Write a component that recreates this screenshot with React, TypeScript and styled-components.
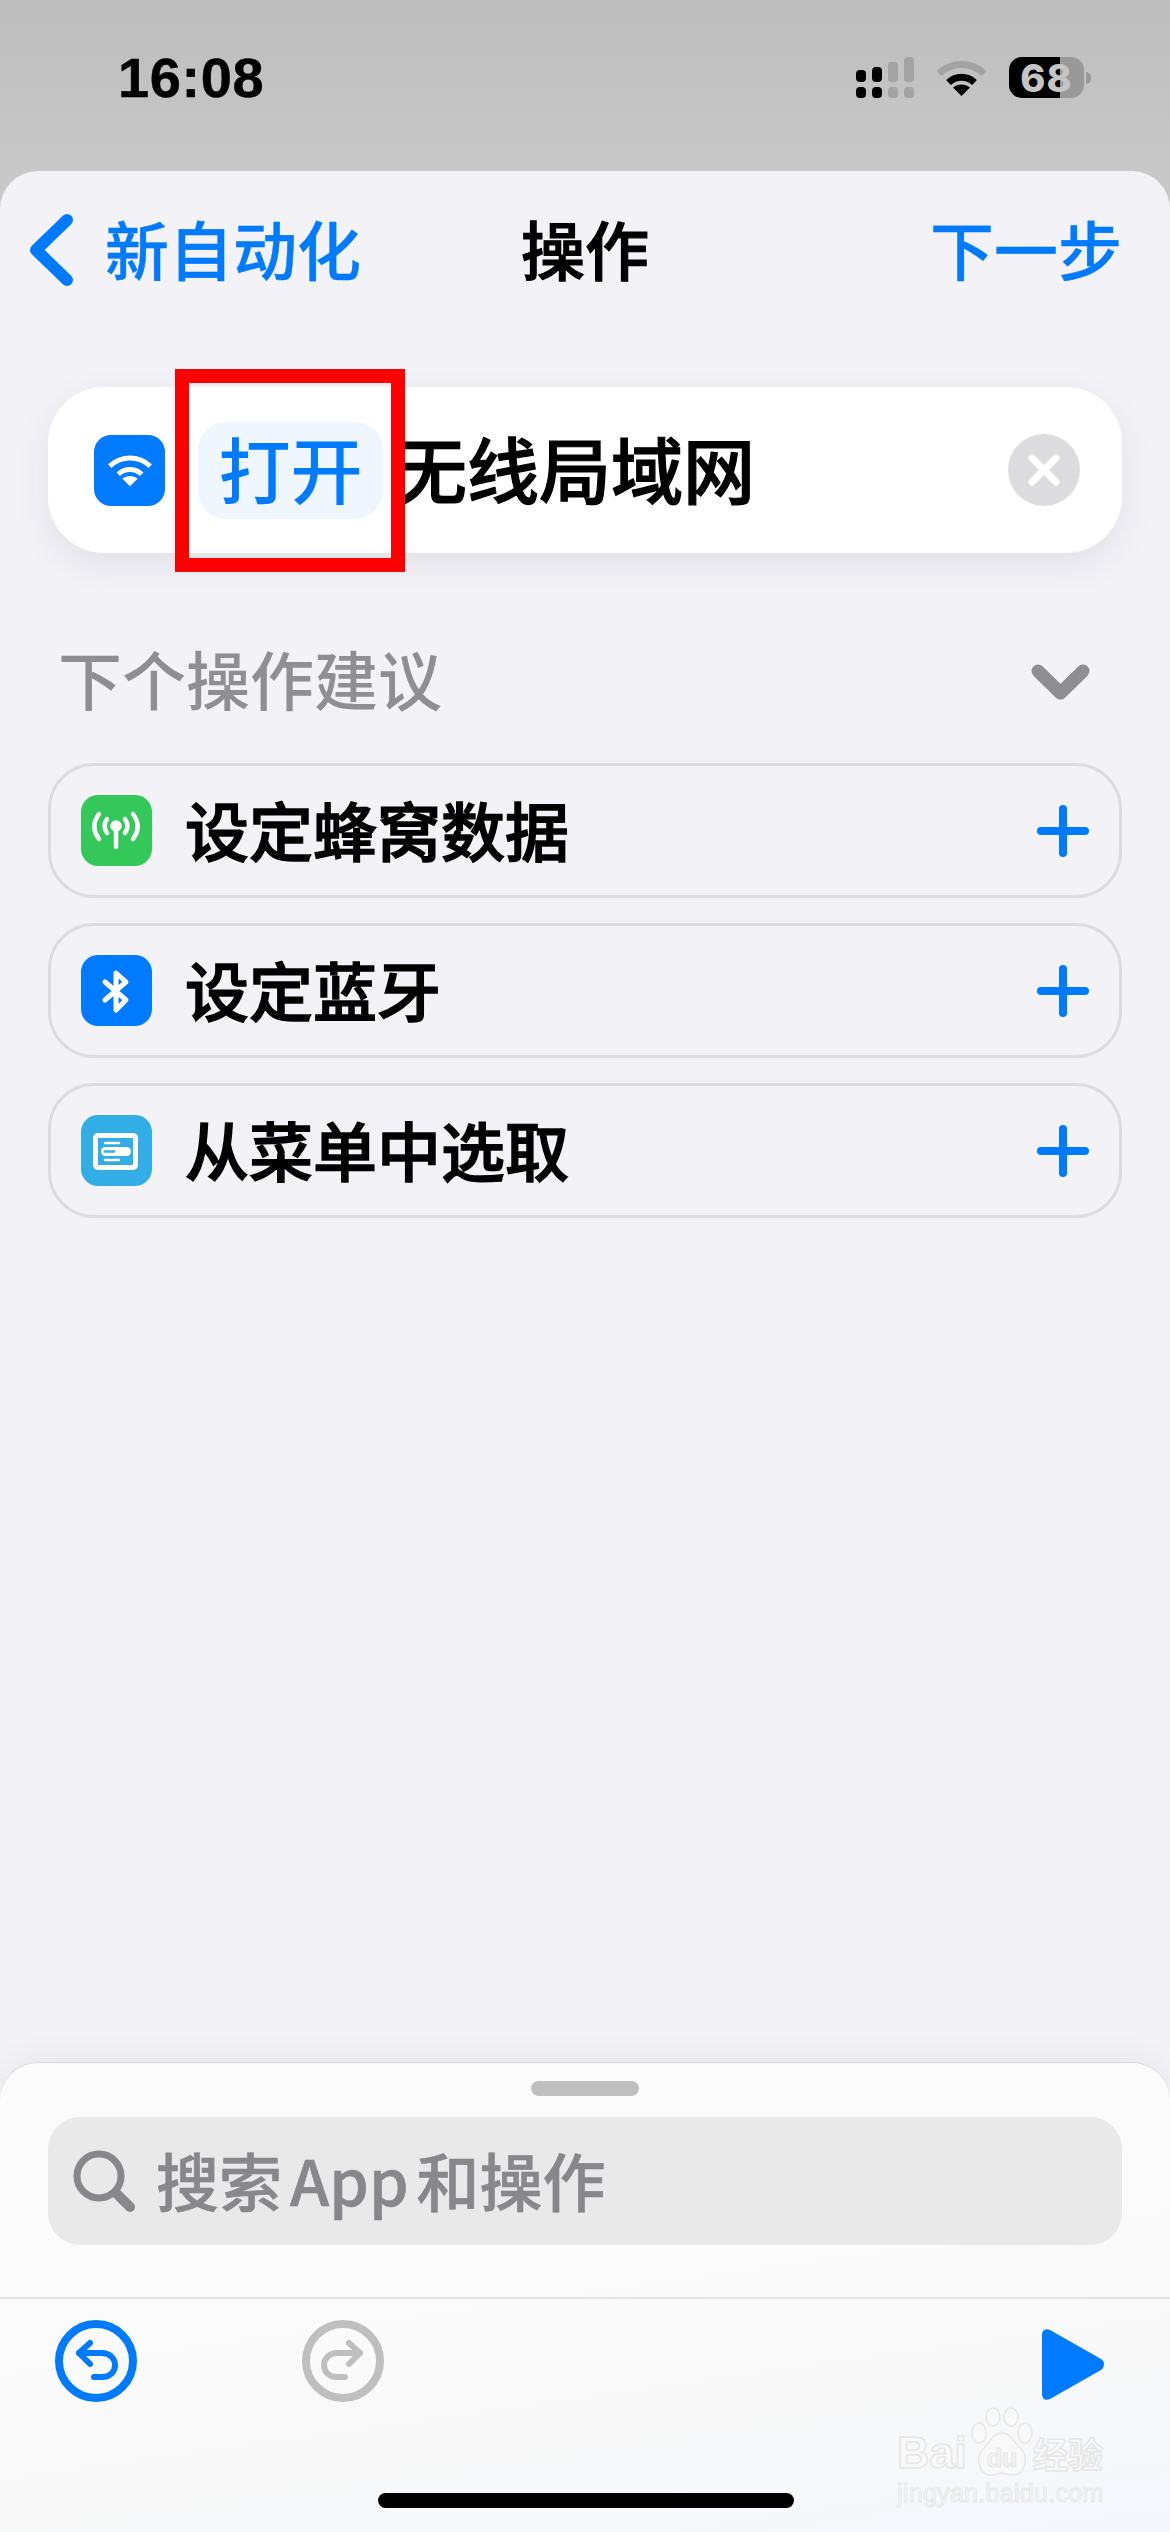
import styled, { createGlobalStyle } from "styled-components";

const Global = createGlobalStyle`
  html, body { margin: 0; padding: 0; background: #c4c4c4; }
  * { box-sizing: border-box; }
  body { font-family: "Noto Sans CJK SC", "Liberation Sans", sans-serif; }
`;

const Screen = styled.div`
  position: relative;
  width: 1170px;
  height: 2532px;
  overflow: hidden;
  display: flex;
  flex-direction: column;
  background: linear-gradient(#bdbdbd, #c8c8c8 171px);
`;

const StatusBar = styled.div`
  height: 171px;
  flex: none;
  padding: 57px 79px 0 118px;
  display: flex;
  justify-content: space-between;
  align-items: flex-start;
`;

const Clock = styled.div`
  font-family: "Liberation Sans", sans-serif;
  font-weight: 700;
  font-size: 56px;
  line-height: 42px;
  letter-spacing: 0.6px;
  color: #000;
  -webkit-text-stroke: 0.5px #000;
`;

const StatusIcons = styled.div`
  display: flex;
  align-items: flex-start;
  gap: 22px;
`;

const WifiSlot = styled.div`
  margin-top: 2px;
  line-height: 0;
`;

const BatteryWrap = styled.div`
  display: flex;
  align-items: center;
  gap: 2px;
`;

const Battery = styled.div`
  position: relative;
  width: 75px;
  height: 41px;
  border-radius: 13px;
  background: linear-gradient(90deg, #000 68%, #999 68%);
  display: flex;
  align-items: center;
  justify-content: center;
  font-family: "Inter", sans-serif;
  font-weight: 800;
  font-size: 38px;
  letter-spacing: 1px;
  color: #c5c5c5;
`;

const BatteryNub = styled.div`
  width: 5px;
  height: 12px;
  border-radius: 0 6px 6px 0;
  background: #999;
`;

const Sheet = styled.div`
  flex: 1;
  display: flex;
  flex-direction: column;
  min-height: 0;
  background: #f2f2f7;
  border-radius: 38px 38px 0 0;
`;

const NavBar = styled.div`
  height: 158px;
  flex: none;
  padding: 0 48px;
  display: grid;
  grid-template-columns: 1fr auto 1fr;
  align-items: center;
`;

const BackLink = styled.div`
  margin-left: -20px;
  display: flex;
  align-items: center;
  gap: 30px;
`;

const NavAction = styled.div<{ $strong?: boolean }>`
  font-size: 64px;
  line-height: 80px;
  padding-bottom: 6px;
  font-weight: 500;
  color: ${(p) => (p.$strong ? "#000" : "#007aff")};
  -webkit-text-stroke: ${(p) => (p.$strong ? "1.2px #000" : "0.4px #007aff")};
`;

const NextLink = styled(NavAction)`
  justify-self: end;
`;

const Body = styled.div`
  flex: 1;
  min-height: 0;
  padding: 58px 48px 0;
  display: flex;
  flex-direction: column;
`;

const ActionCard = styled.div`
  height: 166px;
  flex: none;
  background: #fff;
  border-radius: 56px;
  box-shadow: 0 12px 34px rgba(60, 60, 80, 0.09);
  padding: 0 42px 0 46px;
  display: flex;
  align-items: center;
`;

const AppIcon = styled.div<{ $bg: string }>`
  width: 71px;
  height: 71px;
  flex: none;
  border-radius: 17px;
  background: ${(p) => p.$bg};
  display: flex;
  align-items: center;
  justify-content: center;
`;

const ChipFrame = styled.div`
  position: relative;
  margin-left: 33px;
  width: 185px;
  height: 97px;
  flex: none;
  padding-bottom: 8px;
  border-radius: 28px;
  background: #eff6fe;
  display: flex;
  align-items: center;
  justify-content: center;
  font-size: 72px;
  font-weight: 500;
  line-height: 89px;
  color: #007aff;
`;

const RedMark = styled.div`
  position: absolute;
  left: -23px;
  top: -53px;
  width: 230px;
  height: 203px;
  border: 14px solid #ff0000;
`;

const ActionName = styled.div`
  margin-left: 12px;
  padding-bottom: 8px;
  flex: 1;
  font-size: 72px;
  font-weight: 500;
  line-height: 89px;
  color: #000;
  -webkit-text-stroke: 1.2px #000;
`;

const ClearButton = styled.div`
  width: 72px;
  height: 72px;
  flex: none;
  border-radius: 50%;
  background: #dcdcde;
  display: flex;
  align-items: center;
  justify-content: center;
`;

const SectionHead = styled.div`
  margin-top: 80px;
  height: 88px;
  padding: 0 32px 0 10px;
  display: flex;
  align-items: center;
  justify-content: space-between;
`;

const SectionTitle = styled.div`
  font-size: 64px;
  font-weight: 500;
  line-height: 80px;
  color: #8e8e93;
`;

const SectionToggle = styled.svg`
  margin-top: 10px;
  flex: none;
`;

const SuggestionList = styled.div`
  margin-top: 42px;
  display: flex;
  flex-direction: column;
  gap: 25px;
`;

const Suggestion = styled.div`
  height: 135px;
  border: 3px solid #dcdce0;
  border-radius: 46px;
  padding: 0 29px 0 30px;
  display: flex;
  align-items: center;
`;

const SuggestionName = styled.div`
  margin-left: 33px;
  padding-bottom: 5px;
  flex: 1;
  font-size: 64px;
  font-weight: 500;
  line-height: 80px;
  color: #000;
  -webkit-text-stroke: 1.4px #000;
`;

const BottomPanel = styled.div`
  position: relative;
  height: 469px;
  flex: none;
  border-radius: 38px 38px 0 0;
  background: linear-gradient(172deg, #fbfbfb 45%, #f8f8f8 70%, #f4f8fd 100%);
  box-shadow: 0 -8px 26px rgba(60, 60, 80, 0.06), 0 -1px 0 #dedee2;
  display: flex;
  flex-direction: column;
`;

const Grabber = styled.div`
  align-self: center;
  margin-top: 18px;
  width: 108px;
  height: 15px;
  flex: none;
  border-radius: 8px;
  background: #bfbfbf;
`;

const SearchBox = styled.div`
  margin: 21px 48px 0;
  height: 128px;
  flex: none;
  border-radius: 32px;
  background: #e9e9e9;
  padding: 0 0 0 25px;
  display: flex;
  align-items: center;
  gap: 21px;
`;

const SearchText = styled.div`
  padding-bottom: 5px;
  font-size: 63px;
  font-weight: 500;
  line-height: 80px;
  color: #87878c;
  -webkit-text-stroke: 0.6px #87878c;
`;

const SearchLatin = styled.span`
  margin: 0 8px;
`;

const Toolbar = styled.div`
  margin-top: 52px;
  border-top: 2px solid #e3e3e3;
  flex: 1;
  padding: 21px 65px 0 55px;
  display: flex;
  align-items: flex-start;
  gap: 165px;
`;

const PlayButton = styled.div`
  margin-left: auto;
  margin-top: 9px;
  line-height: 0;
`;

const HomeIndicator = styled.div`
  position: absolute;
  left: 378px;
  bottom: 24px;
  width: 416px;
  height: 15px;
  border-radius: 8px;
  background: #000;
`;

const Watermark = styled.div`
  position: absolute;
  left: 897px;
  top: 343px;
  width: 212px;
  color: #f9f9f9;
  -webkit-text-stroke: 1.5px #e6e6e6;
  font-family: "Liberation Sans", sans-serif;
`;

const MarkTop = styled.div`
  height: 68px;
  display: flex;
  align-items: flex-end;
  font-size: 45px;
  font-weight: 700;
  line-height: 42px;
`;

const MarkPaw = styled.svg`
  margin: 0 0 -3px 3px;
  flex: none;
`;

const MarkCn = styled.span`
  font-family: "Noto Sans CJK SC", sans-serif;
  font-size: 35px;
  line-height: 42px;
  margin-left: -1px;
`;

const MarkUrl = styled.div`
  margin-top: 4px;
  font-size: 25px;
  line-height: 30px;
  letter-spacing: 0.3px;
  -webkit-text-stroke: 1px #e6e6e6;
`;

const suggestions = [
  { name: "设定蜂窝数据", bg: "#34c759", icon: "cell" },
  { name: "设定蓝牙", bg: "#007aff", icon: "bt" },
  { name: "从菜单中选取", bg: "#32ade6", icon: "menu" },
];

function SignalIcon() {
  const upper = [
    [0, 13, 12, "#000"],
    [16, 10, 15, "#000"],
    [32, 5, 20, "#a3a3a3"],
    [48, 0, 25, "#a3a3a3"],
  ] as const;
  return (
    <svg width="58" height="41" viewBox="0 0 58 41">
      {upper.map(([x, y, h, c]) => (
        <g key={x} fill={c}>
          <rect x={x} y={y} width="10" height={h} rx="4" />
          <rect x={x} y="30" width="10" height="11" rx="4" />
        </g>
      ))}
    </svg>
  );
}

function WifiIcon({ color = "#000", outer = "#a3a3a3", size = 51, weight = 7 }) {
  return (
    <svg width={size} height={(size * 37) / 51} viewBox="0 0 51 37" fill="none">
      <path d="M3 14.5C16 2.500 35 2.500 48 14.500" stroke={outer} strokeWidth={weight} />
      <path d="M12.500 23.500C20 16.500 31 16.500 38.500 23.500" stroke={color} strokeWidth={weight} />
      <path d="M25.500 37L17 28.500C22 24.500 29 24.500 34 28.500Z" fill={color} />
    </svg>
  );
}

function RowGlyph({ kind }: { kind: string }) {
  if (kind === "cell") {
    return (
      <svg width="71" height="71" viewBox="0 0 71 71" fill="none" stroke="#fff" strokeWidth="4.500" strokeLinecap="round">
        <circle cx="35" cy="31" r="3.500" fill="#fff" />
        <path d="M35 31V52" />
        <path d="M26 24C22.500 29 22.500 33 26 38M44 24C47.500 29 47.500 33 44 38" />
        <path d="M18 19C12 27 12 36 18 44M52 19C58 27 58 36 52 44" />
      </svg>
    );
  }
  if (kind === "bt") {
    return (
      <svg width="71" height="71" viewBox="0 0 71 71" fill="none" stroke="#fff" strokeWidth="5" strokeLinecap="round" strokeLinejoin="round">
        <path d="M24 27L45 45L35 55V18L45 27L24 45" />
      </svg>
    );
  }
  return (
    <svg width="71" height="71" viewBox="0 0 71 71">
      <rect x="12" y="18" width="45" height="37" rx="5" fill="#fff" />
      <rect x="17" y="23" width="35" height="27" fill="#32ade6" />
      <rect x="20" y="32" width="30" height="9" rx="4.500" fill="#fff" />
      <path d="M24 28H38M24 45H38" stroke="#fff" strokeWidth="2.500" strokeLinecap="round" />
      <path d="M24 36.500H33" stroke="#32ade6" strokeWidth="2.500" strokeLinecap="round" />
    </svg>
  );
}

function PlusIcon() {
  return (
    <svg width="54" height="54" viewBox="0 0 54 54" stroke="#007aff" strokeWidth="8" strokeLinecap="round">
      <path d="M27 5V49M5 27H49" />
    </svg>
  );
}

function HistoryIcon({ color, flip }: { color: string; flip?: boolean }) {
  return (
    <svg width="82" height="82" viewBox="0 0 82 82" fill="none" stroke={color} strokeLinecap="round" strokeLinejoin="round">
      <circle cx="41" cy="41" r="37" strokeWidth="8" />
      <g strokeWidth="6" transform={flip ? "matrix(-1 0 0 1 82 0)" : undefined}>
        <path d="M35 23L24 33L35 44" />
        <path d="M24 33H47C55 33 60 39 60 45C60 52 55 57 47 57H39" />
      </g>
    </svg>
  );
}

export default function App() {
  return (
    <Screen>
      <Global />
      <StatusBar>
        <Clock>16:08</Clock>
        <StatusIcons>
          <SignalIcon />
          <WifiSlot>
            <WifiIcon />
          </WifiSlot>
          <BatteryWrap>
            <Battery>68</Battery>
            <BatteryNub />
          </BatteryWrap>
        </StatusIcons>
      </StatusBar>
      <Sheet>
        <NavBar>
          <BackLink>
            <svg width="47" height="74" viewBox="0 0 47 74" fill="none" stroke="#007aff" strokeWidth="12" strokeLinecap="round" strokeLinejoin="round">
              <path d="M39 7L8 37L39 67" />
            </svg>
            <NavAction>新自动化</NavAction>
          </BackLink>
          <NavAction $strong>操作</NavAction>
          <NextLink>下一步</NextLink>
        </NavBar>
        <Body>
          <ActionCard>
            <AppIcon $bg="#007aff">
              <WifiIcon color="#fff" outer="#fff" size={46} weight={5.5} />
            </AppIcon>
            <ChipFrame>
              打开
              <RedMark />
            </ChipFrame>
            <ActionName>无线局域网</ActionName>
            <ClearButton>
              <svg width="36" height="36" viewBox="0 0 36 36" stroke="#fff" strokeWidth="7" strokeLinecap="round">
                <path d="M6 6L30 30M30 6L6 30" />
              </svg>
            </ClearButton>
          </ActionCard>
          <SectionHead>
            <SectionTitle>下个操作建议</SectionTitle>
            <SectionToggle width="59" height="36" viewBox="0 0 59 36" fill="none" stroke="#8e8e93" strokeWidth="13" strokeLinecap="round" strokeLinejoin="round">
              <path d="M7 7L29.500 29L52 7" />
            </SectionToggle>
          </SectionHead>
          <SuggestionList>
            {suggestions.map((s) => (
              <Suggestion key={s.name}>
                <AppIcon $bg={s.bg}>
                  <RowGlyph kind={s.icon} />
                </AppIcon>
                <SuggestionName>{s.name}</SuggestionName>
                <PlusIcon />
              </Suggestion>
            ))}
          </SuggestionList>
        </Body>
        <BottomPanel>
          <Grabber />
          <SearchBox>
            <svg width="62" height="62" viewBox="0 0 62 62" fill="none" stroke="#87878c" strokeLinecap="round">
              <circle cx="26" cy="26" r="22" strokeWidth="7" />
              <path d="M43 43L57 57" strokeWidth="10" />
            </svg>
            <SearchText>
              搜索<SearchLatin>App</SearchLatin>和操作
            </SearchText>
          </SearchBox>
          <Toolbar>
            <HistoryIcon color="#007aff" />
            <HistoryIcon color="#bfbfbf" flip />
            <PlayButton>
              <svg width="63" height="71" viewBox="0 0 63 71">
                <path d="M0 6C0 1 4-1 8 1L59 30C63 32 63 38 59 41L8 70C4 72 0 70 0 65Z" fill="#007aff" />
              </svg>
            </PlayButton>
          </Toolbar>
          <Watermark>
            <MarkTop>
              Bai
              <MarkPaw width="64" height="70" viewBox="0 0 64 70" fill="#f9f9f9" stroke="#e6e6e6" strokeWidth="1.500">
                <ellipse cx="9" cy="26" rx="7" ry="10" />
                <ellipse cx="23" cy="10" rx="7" ry="9" />
                <ellipse cx="41" cy="10" rx="7" ry="9" />
                <ellipse cx="55" cy="26" rx="7" ry="10" />
                <path d="M32 26C42 26 44 36 51 42C59 50 55 68 43 68C37 68 35 66 32 66C29 66 26 68 20 68C9 68 5 50 13 42C20 36 22 26 32 26Z" />
                <text x="32" y="60" textAnchor="middle" fontSize="25" fontFamily="Liberation Sans" fill="#f4f4f4" strokeWidth="1">du</text>
              </MarkPaw>
              <MarkCn>经验</MarkCn>
            </MarkTop>
            <MarkUrl>jingyan.baidu.com</MarkUrl>
          </Watermark>
          <HomeIndicator />
        </BottomPanel>
      </Sheet>
    </Screen>
  );
}
